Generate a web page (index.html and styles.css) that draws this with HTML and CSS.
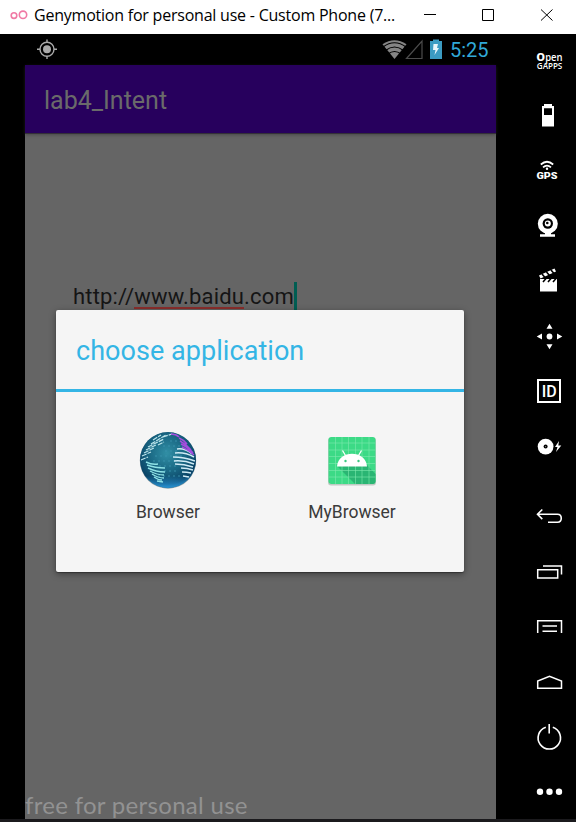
FILE: index.html
```html
<!DOCTYPE html>
<html lang="en">
<head>
<meta charset="utf-8">
<title>Genymotion for personal use</title>
<link rel="stylesheet" href="styles.css">
</head>
<body>
<div class="window">
  <header class="titlebar">
    <svg class="logo" width="18" height="12" viewBox="10 9 18 12"><circle cx="14" cy="15.600" r="2.800"/><circle cx="23" cy="14.800" r="3.700"/></svg>
    <span class="caption">Genymotion for personal use - Custom Phone (7...</span>
    <svg class="controls" width="136" height="20" viewBox="420 5 136 20"><path d="M424 14.500h12M482.500 9.500h11v11h-11zM541 9.500l11.500 11M552.500 9.500l-11.500 11"/></svg>
  </header>
  <div class="emulator">
    <main class="phone">
      <div class="status">
        <svg class="gps" width="20" height="20" viewBox="37 39 20 20"><circle cx="47" cy="49.300" r="4" fill="#aaa"/><circle cx="47" cy="49.300" r="7" fill="none" stroke="#aaa" stroke-width="1.400"/><path d="M47 39.500v3M47 56v3M37 49.300h3M54 49.300h3" stroke="#aaa" stroke-width="1.400"/></svg>
        <svg width="62" height="22" viewBox="382 38 62 22">
          <path d="M382.500 44.300Q394.500 36 406.500 44.300L394.500 59z" fill="#858585"/>
          <path d="M383 47Q394.500 38.500 406 47M385.500 50.500Q394.500 43.500 403.500 50.500M388 54Q394.500 49 401 54" fill="none" stroke="#000" stroke-width="1.200"/>
          <path d="M422 41v17.500h-15.500z" fill="none" stroke="#4c4c4c" stroke-width="1.200"/>
          <path d="M430 41h3v-1.500h6v1.500h3v18h-12z" fill="#3b9bc2"/>
          <path d="M433.500 44h4.500l-1 4h2l-4.500 7 1-5h-2.500z" fill="#e8f5fa"/>
        </svg>
        <span class="clock">5:25</span>
      </div>
      <div class="appbar"><span>lab4_Intent</span></div>
      <div class="screen">
        <div class="field"><span>http://<u>www.baidu</u>.com</span><i class="caret"></i></div>
        <div class="watermark">free for personal use</div>
        <section class="dialog">
          <h1><span>choose application</span></h1>
          <div class="apps">
            <div class="app">
              <svg width="60" height="60" viewBox="138 430 60 60">
                <defs>
                  <radialGradient id="globe" cx=".48" cy=".38" r=".65"><stop offset="0" stop-color="#318fa5"/><stop offset=".5" stop-color="#196783"/><stop offset=".85" stop-color="#094266"/><stop offset="1" stop-color="#1c70a2"/></radialGradient>
                  <linearGradient id="glow" x1="0" y1="0" x2="0" y2="1"><stop offset=".78" stop-color="#2790d0" stop-opacity="0"/><stop offset="1" stop-color="#2790d0"/></linearGradient>
                  <clipPath id="ball"><circle cx="168" cy="460" r="27.500"/></clipPath>
                </defs>
                <circle cx="168" cy="460.500" r="28.200" fill="#8ca0a8"/>
                <circle cx="168" cy="460" r="28" fill="url(#globe)"/><circle cx="168" cy="460" r="28" fill="url(#glow)"/>
                <g clip-path="url(#ball)" fill="none">
                  <path d="M155 456h28M153 461h22M159 466h17M164 471h15M158 476h24M165 451h15M163 446h17M170 441h11" stroke="#3a93ae" stroke-width=".9" stroke-dasharray="2 3"/>
                  <path d="M153 440l8-5M151 444l15-9M148 447l16-8M146 450l10-5M144 453l10-5M142 456l9-4M141 460l7-3M158 445l6-3M163 437l9-3" stroke="#bce4eb" stroke-width="1.200" stroke-dasharray="5 1"/>
                  <path d="M146 462q6 3 12 2M147 465q8 3 18 3M148 468q8 4 17 4M150 471q7 4 14 4M152 474q6 4 12 4M154 477q4 3 8 3M157 481l6 1" stroke="#8fe2e6" stroke-width="1.400"/>
                  <path d="M177 449q8-1 15 5M175 453q10-1 19 4M173 457q11 0 22 4M174 461q10-1 20 3M175 464q9 0 18 3M181 468q6 0 12 2M182 472q5 0 9 1M183 476l6 1" stroke="#cfebf5" stroke-width="1.500"/>
                  <path d="M171 434q5 0 8 3M179 438q5 2 8 6M180 441q6 3 11 9M181 444q7 3 12 9M182 447q7 3 12 8" stroke="#a44ddd" stroke-width="1.500"/>
                </g>
              </svg>
              <span class="name">Browser</span>
            </div>
            <div class="app">
              <svg width="60" height="60" viewBox="322 430 60 60">
                <rect x="328" y="437.500" width="48" height="48" rx="3" fill="#bfcac4"/>
                <rect x="328.500" y="437" width="47" height="47" rx="3" fill="#3cda86"/>
                <path d="M337.500 466.500l17.500 17.500h17.500q3 0 3-3v-7l-9-9.500z" fill="#2ab573"/>
                <path d="M335.500 437v47M342 437v47M348.500 437v47M355.500 437v47M362 437v47M369 437v47M328.500 443h47M328.500 450h47M328.500 456.500h47M328.500 463.500h47M328.500 470.500h47M328.500 477h47" stroke="#7ee9ae" stroke-width=".6"/>
                <path d="M337 466.500c1-17 29-17 30 0z" fill="#fff"/><path d="M342.500 450.500l3 5M361.500 450.500l-3 5" stroke="#fff" stroke-width="1.300"/>
                <circle cx="345.500" cy="461" r="1.200" fill="#3cc982"/><circle cx="358.500" cy="461" r="1.200" fill="#3cc982"/>
              </svg>
              <span class="name">MyBrowser</span>
            </div>
          </div>
        </section>
      </div>
    </main>
    <aside class="toolbar">
      <svg viewBox="530 40 40 40"><text x="536.600" y="60.800" font-size="11" class="heavy" textLength="8.400" lengthAdjust="spacingAndGlyphs">O</text><text x="545.200" y="60.800" font-size="11" textLength="17.300" lengthAdjust="spacingAndGlyphs">pen</text><text x="536.800" y="69.400" font-size="8" textLength="25.500" lengthAdjust="spacingAndGlyphs">GAPPS</text></svg>
      <svg viewBox="530 95 40 40"><path class="solid" fill-rule="evenodd" d="M542 106h2v-2h8v2h2v20.500h-12zM544 108.300v6.700h8v-6.700z"/></svg>
      <svg viewBox="530 150 40 40"><path class="line" d="M540.800 164.500q6.200-5.500 12.400 0M543 167.300q4-3.500 8 0" stroke-width="1.700"/><circle class="solid" cx="547" cy="168.700" r="1.200"/><text x="536.500" y="178.600" font-size="8.700" class="heavy" textLength="21" lengthAdjust="spacingAndGlyphs">GPS</text></svg>
      <svg viewBox="530 205 40 40"><circle class="solid" cx="547.800" cy="223.700" r="10"/><circle cx="547.800" cy="223.500" r="5.200"/><circle class="solid" cx="547.800" cy="223.500" r="3"/><circle cx="547.300" cy="223" r="1.300"/><path class="solid" d="M545 232h6v2.300h4v2.500h-15v-2.500h5z"/></svg>
      <svg viewBox="530 260 40 40"><path class="solid" d="M540 279h17v12.500h-17z"/><path class="solid" d="M539 275.500l15.500-7 1.500 3-15.500 7z"/><path d="M542 274l3 3.500M546.500 272l3 3.500M551 270l3 3.500M543 282l3-3.500M548 282l3-3.500M553 282l3-3.500" stroke="#000" stroke-width="1.600"/></svg>
      <svg viewBox="530 315 40 40"><circle class="solid" cx="549.500" cy="336.500" r="2.900"/><path class="solid" d="M549.500 323.700l3 5h-6zM549.500 349.300l3-5h-6zM536.700 336.500l5.300-3v6zM562.300 336.500l-5.300-3v6z"/></svg>
      <svg viewBox="530 370 40 40"><path class="line" d="M538 380h22v22h-22z" stroke-width="2"/><text x="541.800" y="397" font-size="16" class="id" textLength="15" lengthAdjust="spacingAndGlyphs">ID</text></svg>
      <svg viewBox="530 425 40 40"><circle class="solid" cx="545.600" cy="446.600" r="7.900"/><circle cx="545.600" cy="446.600" r="2"/><circle cx="545.600" cy="446.600" r=".6" fill="#888"/><path class="solid" d="M559 441l-4 6h2.500l-1.500 5 5.300-6.500h-3z"/></svg>
      <svg class="gap" viewBox="530 495 40 40"><path class="line" d="M538 514.300h19.500c5 0 5 7.900 0 7.900h-9.500M542.300 509.500l-4.800 4.800 4.800 4.800" stroke-width="1.600"/></svg>
      <svg viewBox="530 550 40 40"><path class="line" d="M537.700 569.700h20v8.300h-20zM543 565.900h18.500v8.600" stroke-width="1.500"/></svg>
      <svg viewBox="530 605 40 40"><path class="line" d="M537.700 633v-12.300h23.800v12.300M542.500 625.900h14.500M542.500 631.200h14.500" stroke-width="1.500"/></svg>
      <svg viewBox="530 660 40 40"><path class="line" d="M537.700 688.300v-7.300l11.800-4.800 12 4.800v7.300z" stroke-width="1.500"/></svg>
      <svg viewBox="530 715 40 40"><path class="line" d="M545.800 727.200a11.200 11.200 0 1 0 7 0M549.200 724v9.500" stroke-width="1.600"/></svg>
      <svg viewBox="530 770 40 40"><circle class="solid" cx="540" cy="791.700" r="3.200"/><circle class="solid" cx="549.500" cy="791.700" r="3.200"/><circle class="solid" cx="559" cy="791.700" r="3.200"/></svg>
    </aside>
  </div>
</div>
</body>
</html>
```
FILE: styles.css
```css
* { box-sizing: border-box; }
body { margin: 0; background: #000; font-family: Roboto, sans-serif; }
svg { display: block; flex: none; }
span { white-space: nowrap; }
.window { width: 576px; height: 822px; display: flex; flex-direction: column; overflow: hidden; border-bottom: 3px solid #1b1a1d; }
.titlebar { height: 34px; flex: none; display: flex; background: #fff; padding-left: 10px; }
.logo { margin-top: 9px; fill: none; stroke: #f07aa5; stroke-width: 1.6; }
.caption { width: 386px; padding-left: 6px; flex: none; font: 16px/31px "Open Sans", sans-serif; letter-spacing: -0.22px; color: #000; }
.controls { margin: 5px 0 0 6px; fill: none; stroke: #000; stroke-width: 1; }
.emulator { flex: 1; display: flex; padding-left: 25px; }
.phone { width: 471px; display: flex; flex-direction: column; }
.status { height: 31px; flex: none; display: flex; padding: 4px 7px 0 12px; }
.gps { margin: 1px auto 0 0; }
.clock { width: 45px; padding-left: 6px; font-size: 20px; line-height: 24px; color: #31a9d8; }
.appbar { height: 69px; flex: none; padding: 1px 0 0 19px; background: #27005d; border-bottom: 1px solid #343038; font-size: 25px; line-height: 70px; color: #6a6a6a; box-shadow: 0 1px 3px #3338; z-index: 1; }
.screen { flex: 1; position: relative; display: flex; flex-direction: column; background: #656565; }
.field { margin: 148px 0 0 48px; height: 32px; display: flex; font-size: 22px; line-height: 30px; letter-spacing: 0.18px; color: #151515; }
.field u { display: inline-block; height: 27px; text-decoration: none; border-bottom: 2px solid #8a2d2b; vertical-align: top; }
.caret { width: 3px; height: 32px; background: #005d52; }
.watermark { margin-top: auto; height: 27px; font: 24px/26px Lato, sans-serif; letter-spacing: 0.3px; color: #929292; }
.dialog { position: absolute; left: 31px; top: 176px; width: 408px; height: 262px; background: #f5f5f5; border-radius: 2px; box-shadow: 0 2px 7px #0006, 0 1px 1px #0005; }
.dialog h1 { margin: 0; height: 82px; padding-left: 20px; border-bottom: 3px solid #34b5e5; font-weight: 400; font-size: 27px; line-height: 83px; letter-spacing: 0.05px; color: #34b5e5; }
.apps { display: flex; padding: 38px 20px 0; }
.app { width: 184px; display: flex; flex-direction: column; align-items: center; }
.name { margin-top: 10px; font-size: 17.5px; line-height: 24px; color: #3b3b3b; }
.toolbar { width: 80px; padding: 6px 0 0 34px; display: flex; flex-direction: column; gap: 15px; }
.toolbar svg { width: 40px; height: 40px; }
.toolbar .gap { margin-top: 15px; }
.toolbar text { fill: #fff; font-family: "Open Sans", sans-serif; font-weight: 600; }
.toolbar .heavy { font-family: Roboto, sans-serif; font-weight: 900; }
.toolbar .id { font-family: Roboto, sans-serif; font-weight: 500; }
.solid { fill: #fff; }
.line { fill: none; stroke: #fff; }
```
